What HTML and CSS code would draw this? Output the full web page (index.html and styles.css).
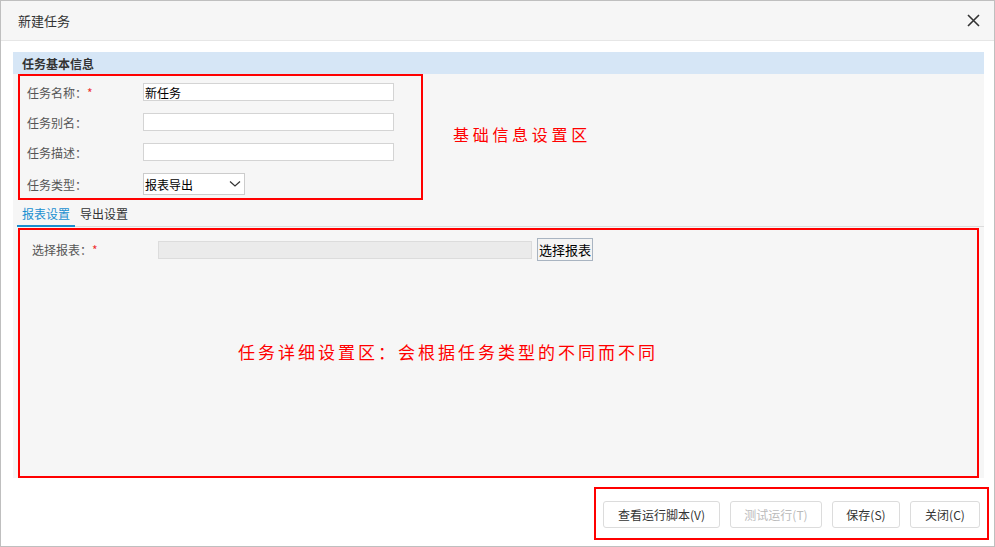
FILE: index.html
```html
<!DOCTYPE html>
<html lang="zh-CN">
<head>
    <meta charset="UTF-8">
    <title>新建任务</title>
    <link rel="stylesheet" href="styles.css">
</head>
<body>
<div class="dialog">
    <div class="dialog-header">
        <span class="dialog-title">新建任务</span>
        <svg class="close-icon" width="13" height="13" viewBox="0 0 13 13">
            <path d="M1 1 L12 12 M12 1 L1 12" stroke="#333" stroke-width="1.6" fill="none"/>
        </svg>
    </div>
    <div class="dialog-body">
        <div class="panel">
            <div class="section-title">任务基本信息</div>
            <div class="basic">
                <div class="basic-box">
                    <div class="form-row">
                        <label class="label">任务名称：<span class="required">*</span></label>
                        <input class="text-input" type="text" value="新任务">
                    </div>
                    <div class="form-row">
                        <label class="label">任务别名：</label>
                        <input class="text-input" type="text">
                    </div>
                    <div class="form-row">
                        <label class="label">任务描述：</label>
                        <input class="text-input" type="text">
                    </div>
                    <div class="form-row last">
                        <label class="label">任务类型：</label>
                        <div class="select-box">
                            <span>报表导出</span>
                            <svg width="12" height="8" viewBox="0 0 12 8">
                                <path d="M1 1.5 L6 6 L11 1.5" stroke="#333" stroke-width="1.2" fill="none"/>
                            </svg>
                        </div>
                    </div>
                </div>
                <div class="note note-basic">基础信息设置区</div>
            </div>
            <div class="tabs">
                <div class="tab active">报表设置</div>
                <div class="tab">导出设置</div>
            </div>
            <div class="detail-box">
                <div class="detail-row">
                    <label class="label wide">选择报表：<span class="required">*</span></label>
                    <input class="text-input disabled" type="text" disabled>
                    <button class="pick-button">选择报表</button>
                </div>
                <div class="note note-detail">任务详细设置区：会根据任务类型的不同而不同</div>
            </div>
        </div>
    </div>
    <div class="footer">
        <div class="footer-box">
            <button class="btn btn-script">查看运行脚本(V)</button>
            <button class="btn btn-test" disabled>测试运行(T)</button>
            <button class="btn btn-save">保存(S)</button>
            <button class="btn btn-close">关闭(C)</button>
        </div>
    </div>
</div>
</body>
</html>
```

FILE: styles.css
```css
body {
    margin: 0;
    background-color: #fff;
    font-family: "Noto Sans CJK SC", "Microsoft YaHei", sans-serif;
    font-size: 12px;
    color: #333;
}

.dialog {
    width: 995px;
    height: 547px;
    box-sizing: border-box;
    border: 1px solid #bfbfbf;
    background-color: #fff;
    display: flex;
    flex-direction: column;
}

.dialog-header {
    height: 39px;
    background-color: #f6f6f6;
    border-bottom: 1px solid #e6e6e6;
    display: flex;
    align-items: center;
    justify-content: space-between;
    padding: 0 14px 0 17px;
}

.dialog-title {
    font-size: 13px;
    color: #333;
}

.close-icon {
    display: block;
}

.dialog-body {
    padding: 11px 10px 0 12px;
}

.panel {
    background-color: #f6f6f6;
}

.section-title {
    height: 22px;
    line-height: 23px;
    background-color: #d6e6f6;
    padding-left: 9px;
    font-weight: bold;
    color: #333;
}

.basic {
    display: flex;
    align-items: center;
}

.basic-box {
    width: 405px;
    height: 126px;
    box-sizing: border-box;
    border: 2px solid #f00;
    margin-left: 5px;
    padding: 7px 0 0 7px;
}

.form-row {
    display: flex;
    align-items: center;
    height: 18px;
    margin-bottom: 12px;
}

.form-row.last {
    height: 22px;
    margin-bottom: 0;
}

.label {
    width: 116px;
    color: #555;
    flex-shrink: 0;
}

.label.wide {
    width: 126px;
}

.required {
    color: #e33;
}

.text-input {
    width: 251px;
    height: 18px;
    box-sizing: border-box;
    border: 1px solid #d4d4d4;
    background-color: #fff;
    padding: 0 1px;
    margin: 0;
    font-family: inherit;
    font-size: 12px;
    color: #000;
    outline: none;
}

.text-input.disabled {
    width: 374px;
    background-color: #ebebeb;
    border-color: #dcdcdc;
}

.select-box {
    width: 102px;
    height: 22px;
    box-sizing: border-box;
    border: 1px solid #ccc;
    background-color: #fff;
    display: flex;
    align-items: center;
    justify-content: space-between;
    padding: 0 3px 0 1px;
    color: #000;
}

.note {
    color: #f00;
}

.note-basic {
    font-size: 16px;
    letter-spacing: 3.7px;
    margin-left: 30px;
    margin-top: -6px;
}

.tabs {
    display: flex;
    height: 26px;
    margin-left: 4px;
    border-bottom: 1px solid #dcdcdc;
}

.tab {
    padding: 0 5px;
    line-height: 27px;
    color: #333;
}

.tab.active {
    color: #1a8fd0;
    border-bottom: 2px solid #1a8fd0;
    height: 25px;
    margin-bottom: -1px;
}

.detail-box {
    height: 250px;
    box-sizing: border-box;
    border: 2px solid #f00;
    margin: 1px 5px 0 5px;
    padding: 8px 0 0 12px;
}

.detail-row {
    display: flex;
    align-items: center;
    height: 23px;
}

.pick-button {
    margin-left: 5px;
    width: 56px;
    height: 23px;
    border: 1px solid #a9b4c1;
    background-color: #f4f4f4;
    padding: 0;
    font-family: inherit;
    font-size: 13px;
    color: #000;
}

.note-detail {
    font-size: 17px;
    letter-spacing: 3px;
    margin-top: 78px;
    padding-left: 206px;
    line-height: 26px;
}

.footer {
    display: flex;
    justify-content: flex-end;
    padding: 9px 5px 0 0;
}

.footer-box {
    display: flex;
    gap: 10px;
    border: 2px solid #f00;
    padding: 12px 7px 10px 7px;
}

.btn {
    height: 27px;
    border: 1px solid #dcdcdc;
    border-radius: 3px;
    background-color: #fff;
    padding: 0;
    font-family: inherit;
    font-size: 12px;
    color: #333;
}

.btn:disabled {
    color: #bbb;
}

.btn-script {
    width: 117px;
}

.btn-test {
    width: 92px;
}

.btn-save {
    width: 68px;
}

.btn-close {
    width: 70px;
}
```
